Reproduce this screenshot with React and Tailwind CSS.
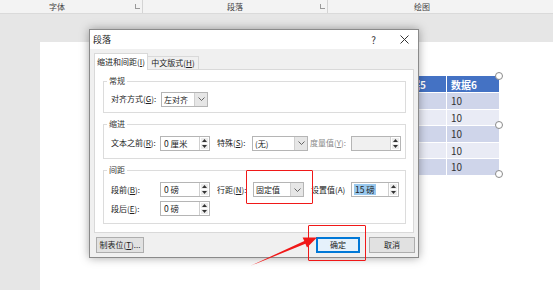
import React from 'react';

const FONT = "font-['Microsoft_YaHei','Noto_Sans_CJK_SC',sans-serif]";

function U({ children }) {
  return <span className="underline underline-offset-1">{children}</span>;
}

function SpinBtns() {
  return (
    <div className="flex w-[10px] flex-col gap-[1px] border-l border-[#d0d0d0] bg-white p-[1px]">
      <div className="flex flex-1 items-center justify-center bg-[#ececec]">
        <svg width="5" height="3" viewBox="0 0 5 3"><path d="M0 3 L2.5 0 L5 3 Z" fill="#333" /></svg>
      </div>
      <div className="flex flex-1 items-center justify-center bg-[#ececec]">
        <svg width="5" height="3" viewBox="0 0 5 3"><path d="M0 0 L2.5 3 L5 0 Z" fill="#333" /></svg>
      </div>
    </div>
  );
}

function Spin({ value, className = 'w-[50px]', selected, disabled }) {
  return (
    <div className={`flex h-[15px] shrink-0 border border-[#b5b5b5] ${disabled ? 'bg-[#f0f0f0]' : 'bg-white'} ${className}`}>
      <div className="flex flex-1 items-center pl-[2px]">
        {value && (
          <span className={`px-[1px] text-[8.5px] leading-[11px] ${selected ? 'bg-[#99c9ef]' : ''}`}>{value}</span>
        )}
      </div>
      <SpinBtns />
    </div>
  );
}

function Select({ value, className = 'w-[50px]' }) {
  return (
    <div className={`relative z-10 flex h-[15px] shrink-0 border border-[#b5b5b5] bg-white ${className}`}>
      <div className="flex flex-1 items-center pl-[2px] leading-[11px]">{value}</div>
      <div className="flex w-[13px] items-center justify-center border-l border-[#cfcfcf] bg-[#e6e6e6]">
        <svg width="7" height="4" viewBox="0 0 7 4"><path d="M0.5 0.5 L3.5 3.5 L6.5 0.5" fill="none" stroke="#555" strokeWidth="0.9" /></svg>
      </div>
    </div>
  );
}

function Group({ title, className, children }) {
  return (
    <div className={`relative ml-[8px] mr-[7px] border border-[#dcdcdc] ${className}`}>
      <span className="absolute -top-[7px] left-[3px] bg-white px-[2px] leading-[12px] text-[#333]">{title}</span>
      {children}
    </div>
  );
}

function Dialog() {
  return (
    <div className="absolute left-[89px] top-[29px] flex h-[229px] w-[330px] flex-col border border-[#8a8a8a] bg-[#f0f0f0] text-[8px] shadow-[0_0_9px_rgba(0,0,0,0.35)]">
      {/* title bar */}
      <div className="flex h-[19px] items-center bg-white pl-[3px] pr-[9px]">
        <span className="flex-1 text-[9px] text-[#222]">段落</span>
        <span className="mr-[24px] text-[10px] text-[#333]">?</span>
        <svg width="9" height="9" viewBox="0 0 9 9"><path d="M0.5 0.5 L8.5 8.5 M8.5 0.5 L0.5 8.5" stroke="#333" strokeWidth="1" /></svg>
      </div>

      {/* tabs */}
      <div className="mt-[4px] flex items-end px-[4px]">
        <div className="relative z-10 -mb-px flex h-[17px] w-[54px] items-center justify-center border border-b-0 border-[#d9d9d9] bg-white text-[#222]">
          缩进和间距(<U>I</U>)
        </div>
        <div className="flex h-[13px] w-[51px] items-center justify-center border border-b-0 border-l-0 border-[#d9d9d9] bg-[#f0f0f0] text-[#222]">
          中文版式(<U>H</U>)
        </div>
      </div>

      {/* panel */}
      <div className="mx-[4px] flex h-[164px] flex-col border border-[#d9d9d9] bg-white pt-[11px] text-[#222]">
        <Group title="常规" className="h-[32px]">
          <div className="flex h-full items-center pl-[7px] pt-[4px]">
            <span className="w-[50px] shrink-0">对齐方式(<U>G</U>):</span>
            <Select value="左对齐" className="w-[47px]" />
          </div>
        </Group>

        <Group title="缩进" className="mt-[11px] h-[35px]">
          <div className="flex h-full items-center pl-[7px] pt-[3px]">
            <span className="w-[49px] shrink-0">文本之前(<U>R</U>):</span>
            <Spin value="0 厘米" className="w-[50px]" />
            <span className="ml-[7px] w-[35px] shrink-0">特殊(<U>S</U>):</span>
            <Select value="(无)" className="w-[56px]" />
            <span className="ml-[2px] w-[41px] shrink-0 text-[#8a8a8a]">度量值(<U>Y</U>):</span>
            <Spin className="w-[50px]" disabled />
          </div>
        </Group>

        <Group title="间距" className="mt-[11px] h-[54px]">
          <div className="flex flex-col gap-[4px] pl-[7px] pt-[11px]">
            <div className="flex items-center">
              <span className="w-[49px] shrink-0">段前(<U>B</U>):</span>
              <Spin value="0 磅" className="w-[50px]" />
              <span className="ml-[7px] w-[36px] shrink-0">行距(<U>N</U>):</span>
              <Select value="固定值" className="w-[51px]" />
              <span className="ml-[7px] w-[40px] shrink-0">设置值(A)</span>
              <Spin value="15 磅" className="w-[48px]" selected />
            </div>
            <div className="flex items-center">
              <span className="w-[49px] shrink-0">段后(<U>E</U>):</span>
              <Spin value="0 磅" className="w-[50px]" />
            </div>
          </div>
        </Group>
      </div>

      {/* buttons */}
      <div className="mt-[4px] flex items-center pl-[6px] pr-[3px]">
        <div className="flex h-[16px] w-[48px] items-center justify-center border border-[#adadad] bg-[#e1e1e1] text-[#222]">
          制表位(<U>T</U>)...
        </div>
        <div className="flex-1" />
        <div className="flex h-[16px] w-[44px] items-center justify-center border border-[#0078d7] bg-[#e5f1fb] text-[#222] shadow-[inset_0_0_0_1px_#0078d7]">
          确定
        </div>
        <div className="ml-[9px] flex h-[16px] w-[46px] items-center justify-center border border-[#adadad] bg-[#e1e1e1] text-[#222]">
          取消
        </div>
      </div>
    </div>
  );
}

function Table() {
  const rows = ['bg-[#cfd5ea]', 'bg-[#e9ebf5]', 'bg-[#cfd5ea]', 'bg-[#e9ebf5]', 'bg-[#cfd5ea]'];
  return (
    <div className="absolute left-[360px] top-[76px] w-[139px] text-[10px]">
      <div className="flex h-[16px] bg-[#4472c4] font-semibold text-white">
        <div className="flex w-[87px] items-center justify-end border-r border-white pr-[20px]">数据5</div>
        <div className="flex flex-1 items-center pl-[4px]">数据6</div>
      </div>
      {rows.map((c, i) => (
        <div key={i} className={`flex h-[16.5px] border-t border-white ${c} text-[#333]`}>
          <div className="w-[87px] border-r border-white" />
          <div className="flex flex-1 items-center pl-[4px]">10</div>
        </div>
      ))}
    </div>
  );
}

function Handle({ className }) {
  return <div className={`absolute h-[8px] w-[8px] rounded-full border border-[#8a8a8a] bg-white ${className}`} />;
}

export default function App() {
  return (
    <div className={`relative h-[290px] w-[553px] overflow-hidden whitespace-nowrap bg-[#e6e6e6] text-[9px] ${FONT}`}>
      {/* ribbon group labels */}
      <div className="flex h-[14px] border-b border-[#dadada] bg-[#f3f3f3] text-[8px] leading-[14px] text-[#444]">
        <div className="relative w-[143px] border-r border-[#d4d4d4] pl-[49px]">
          字体
          <span className="absolute right-[2px] top-[4px] h-[5px] w-[5px] border-b border-l border-[#999]" />
        </div>
        <div className="relative w-[185px] border-r border-[#d4d4d4] text-center">
          段落
          <span className="absolute right-[2px] top-[4px] h-[5px] w-[5px] border-b border-l border-[#999]" />
        </div>
        <div className="pl-[86px]">绘图</div>
      </div>

      {/* page */}
      <div className="absolute left-[40px] top-[42px] h-[260px] w-[520px] bg-white" />

      <Table />
      <Handle className="left-[495px] top-[72px]" />
      <Handle className="left-[495px] top-[121px]" />
      <Handle className="left-[495px] top-[170px]" />

      <Dialog />

      {/* annotations */}
      <div className="absolute left-[246px] top-[170px] h-[34px] w-[67px] rounded-[1px] border-[1.5px] border-[#f01818]" />
      <div className="absolute left-[308px] top-[225px] h-[36px] w-[58px] rounded-[1px] border-[1.5px] border-[#f01818]" />
      <svg className="absolute left-0 top-0" width="553" height="290" viewBox="0 0 553 290">
        <polygon
          points="250,266 304.3,241 302.6,237.4 317,237.6 307,247.4 305.4,243.8"
          fill="#f01818"
        />
      </svg>
    </div>
  );
}
